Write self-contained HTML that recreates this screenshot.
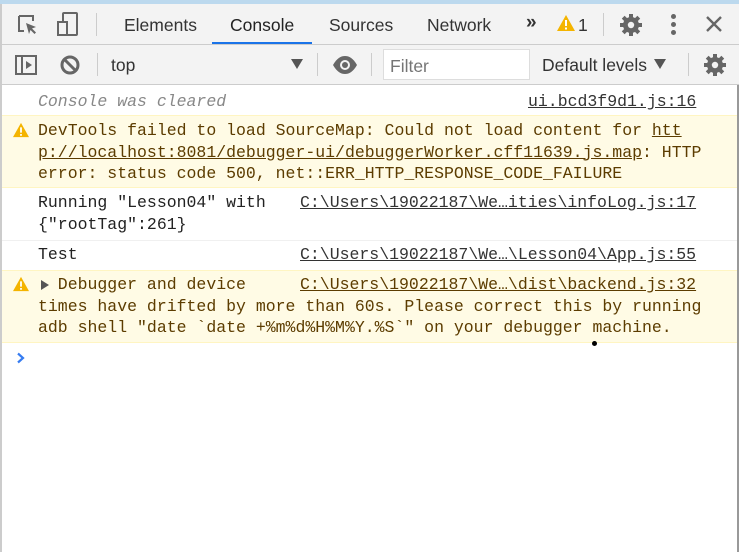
<!DOCTYPE html>
<html><head><style>
*{margin:0;padding:0;box-sizing:border-box}
body{width:739px;height:552px;overflow:hidden;background:#fff;position:relative;font-family:"Liberation Sans",sans-serif}
.a{position:absolute}
.ui{font-family:"Liberation Sans",sans-serif;font-size:17.5px;color:#333}
.m{font-family:"Liberation Mono",monospace;font-size:16.5px;line-height:21.5px;white-space:pre;color:#222}
.w{color:#5c3c00}
u{text-decoration:underline}
.lnk{color:#333;text-decoration:underline}
</style></head><body>
<div class="a" style="left:0;top:0;width:739px;height:4px;background:#bcd9ee"></div>
<div class="a" style="left:0;top:4px;width:739px;height:80px;background:#f3f3f3"></div>
<div class="a" style="left:0;top:44px;width:739px;height:1px;background:#ccc"></div>
<div class="a" style="left:0;top:84px;width:739px;height:1px;background:#ccc"></div>
<div class="a" style="left:0;top:4px;width:2px;height:548px;background:#ccc"></div>
<div class="a" style="left:737px;top:85px;width:2px;height:467px;background:#999"></div>
<svg class="a" style="left:16px;top:13px" width="24" height="24" viewBox="0 0 24 24"><path d="M3 3h14v5M3 3v15h5" fill="none" stroke="#666" stroke-width="2"/><path d="M10 10l10 4-4 1.5 4 4-1.5 1.5-4-4-1.5 4z" fill="#666"/></svg>
<svg class="a" style="left:55px;top:11px" width="26" height="26" viewBox="0 0 26 26"><rect x="8" y="2" width="14" height="22" rx="1" fill="none" stroke="#666" stroke-width="2"/><rect x="3" y="11" width="9" height="13" fill="#f3f3f3" stroke="#666" stroke-width="2"/></svg>
<div class="a" style="left:96px;top:13px;width:1px;height:23px;background:#ccc"></div>
<div class="a ui" style="left:124px;top:15px">Elements</div>
<div class="a ui" style="left:230px;top:15px;color:#222">Console</div>
<div class="a" style="left:212px;top:42px;width:100px;height:2px;background:#1a73e8"></div>
<div class="a ui" style="left:329px;top:15px">Sources</div>
<div class="a ui" style="left:427px;top:15px">Network</div>
<div class="a ui" style="left:526px;top:12px;font-weight:bold;font-size:19px">»</div>
<svg class="a" style="left:556px;top:14px" width="20" height="18" viewBox="0 0 20 18"><path d="M10 1L19 17H1z" fill="#f4b400"/><rect x="9" y="6" width="2" height="6" fill="#fff"/><rect x="9" y="13.5" width="2" height="2" fill="#fff"/></svg>
<div class="a ui" style="left:578px;top:15px">1</div>
<div class="a" style="left:603px;top:13px;width:1px;height:23px;background:#ccc"></div>
<svg class="a" style="left:619px;top:13px" width="24" height="24" viewBox="0 0 24 24"><g fill="#666"><circle cx="12" cy="12" r="8"/><g stroke="#666" stroke-width="4"><path d="M12 1v22M1 12h22M4.2 4.2l15.6 15.6M19.8 4.2L4.2 19.8"/></g></g><circle cx="12" cy="12" r="3.2" fill="#f3f3f3"/></svg>
<div class="a" style="left:671px;top:14px;width:5px;height:5px;border-radius:3px;background:#666;box-shadow:0 8px 0 #666,0 16px 0 #666"></div>
<svg class="a" style="left:705px;top:15px" width="18" height="18" viewBox="0 0 18 18"><path d="M2 2l14 14M16 2L2 16" stroke="#666" stroke-width="2.4"/></svg>
<svg class="a" style="left:14px;top:53px" width="24" height="24" viewBox="0 0 24 24"><rect x="2" y="3" width="20" height="18" fill="none" stroke="#666" stroke-width="2"/><path d="M8 3v18" stroke="#666" stroke-width="2"/><path d="M12 8l6 4-6 4z" fill="#666"/></svg>
<svg class="a" style="left:59px;top:54px" width="22" height="22" viewBox="0 0 22 22"><circle cx="11" cy="11" r="8" fill="none" stroke="#666" stroke-width="3"/><path d="M5.5 5.5l11 11" stroke="#666" stroke-width="3"/></svg>
<div class="a" style="left:97px;top:53px;width:1px;height:23px;background:#ccc"></div>
<div class="a ui" style="left:111px;top:55px">top</div>
<div class="a" style="left:291px;top:59px;width:0;height:0;border-left:6px solid transparent;border-right:6px solid transparent;border-top:10px solid #555"></div>
<div class="a" style="left:317px;top:53px;width:1px;height:23px;background:#ccc"></div>
<svg class="a" style="left:332px;top:55px" width="26" height="20" viewBox="0 0 26 20"><path d="M1 10C5 3 9 1 13 1s8 2 12 9c-4 7-8 9-12 9S5 17 1 10z" fill="#666"/><circle cx="13" cy="10" r="5" fill="#f3f3f3"/><circle cx="13" cy="10" r="3" fill="#666"/></svg>
<div class="a" style="left:371px;top:53px;width:1px;height:23px;background:#ccc"></div>
<div class="a" style="left:383px;top:49px;width:147px;height:31px;background:#fff;border:1px solid #ddd"></div>
<div class="a ui" style="left:390px;top:56px;color:#757575">Filter</div>
<div class="a ui" style="left:542px;top:55px">Default levels</div>
<div class="a" style="left:654px;top:59px;width:0;height:0;border-left:6px solid transparent;border-right:6px solid transparent;border-top:10px solid #555"></div>
<div class="a" style="left:688px;top:53px;width:1px;height:23px;background:#ccc"></div>
<svg class="a" style="left:703px;top:53px" width="24" height="24" viewBox="0 0 24 24"><g fill="#666"><circle cx="12" cy="12" r="8"/><g stroke="#666" stroke-width="4"><path d="M12 1v22M1 12h22M4.2 4.2l15.6 15.6M19.8 4.2L4.2 19.8"/></g></g><circle cx="12" cy="12" r="3.2" fill="#f3f3f3"/></svg>
<div class="a m" style="left:38px;top:91px;color:#888;font-style:italic">Console was cleared</div>
<div class="a m lnk" style="left:528px;top:91px">ui.bcd3f9d1.js:16</div>
<div class="a" style="left:2px;top:115px;width:735px;height:73px;background:#fffbe5;border-top:1px solid #fff5c2;border-bottom:1px solid #fff5c2"></div>
<svg class="a" style="left:12px;top:122px" width="18" height="16" viewBox="0 0 20 18"><path d="M10 1L19 17H1z" fill="#f4b400"/><rect x="9" y="6" width="2" height="6" fill="#fff"/><rect x="9" y="13.5" width="2" height="2" fill="#fff"/></svg>
<div class="a m w" style="left:38px;top:120px">DevTools failed to load SourceMap: Could not load content for <u>htt</u>
<u>p://localhost:8081/debugger-ui/debuggerWorker.cff11639.js.map</u>: HTTP
error: status code 500, net::ERR_HTTP_RESPONSE_CODE_FAILURE</div>
<div class="a m" style="left:38px;top:192px">Running "Lesson04" with
{"rootTag":261}</div>
<div class="a m lnk" style="left:300px;top:192px">C:\Users\19022187\We…ities\infoLog.js:17</div>
<div class="a" style="left:2px;top:240px;width:735px;height:1px;background:#f0f0f0"></div>
<div class="a m" style="left:38px;top:244px">Test</div>
<div class="a m lnk" style="left:300px;top:244px">C:\Users\19022187\We…\Lesson04\App.js:55</div>
<div class="a" style="left:2px;top:270px;width:735px;height:73px;background:#fffbe5;border-top:1px solid #fff5c2;border-bottom:1px solid #fff5c2"></div>
<svg class="a" style="left:12px;top:276px" width="18" height="16" viewBox="0 0 20 18"><path d="M10 1L19 17H1z" fill="#f4b400"/><rect x="9" y="6" width="2" height="6" fill="#fff"/><rect x="9" y="13.5" width="2" height="2" fill="#fff"/></svg>
<div class="a" style="left:41px;top:280px;width:0;height:0;border-top:5px solid transparent;border-bottom:5px solid transparent;border-left:8px solid #555"></div>
<div class="a m w" style="left:38px;top:274px">  Debugger and device
times have drifted by more than 60s. Please correct this by running
adb shell "date `date +%m%d%H%M%Y.%S`" on your debugger machine.</div>
<div class="a m w lnk" style="left:300px;top:274px;color:#5c3c00">C:\Users\19022187\We…\dist\backend.js:32</div>
<div class="a" style="left:592px;top:341px;width:5px;height:5px;border-radius:3px;background:#000"></div>
<svg class="a" style="left:16px;top:352px" width="10" height="12" viewBox="0 0 10 12"><path d="M2 1.5l5 4.5-5 4.5" fill="none" stroke="#367cf1" stroke-width="2.2"/></svg>
</body></html>
